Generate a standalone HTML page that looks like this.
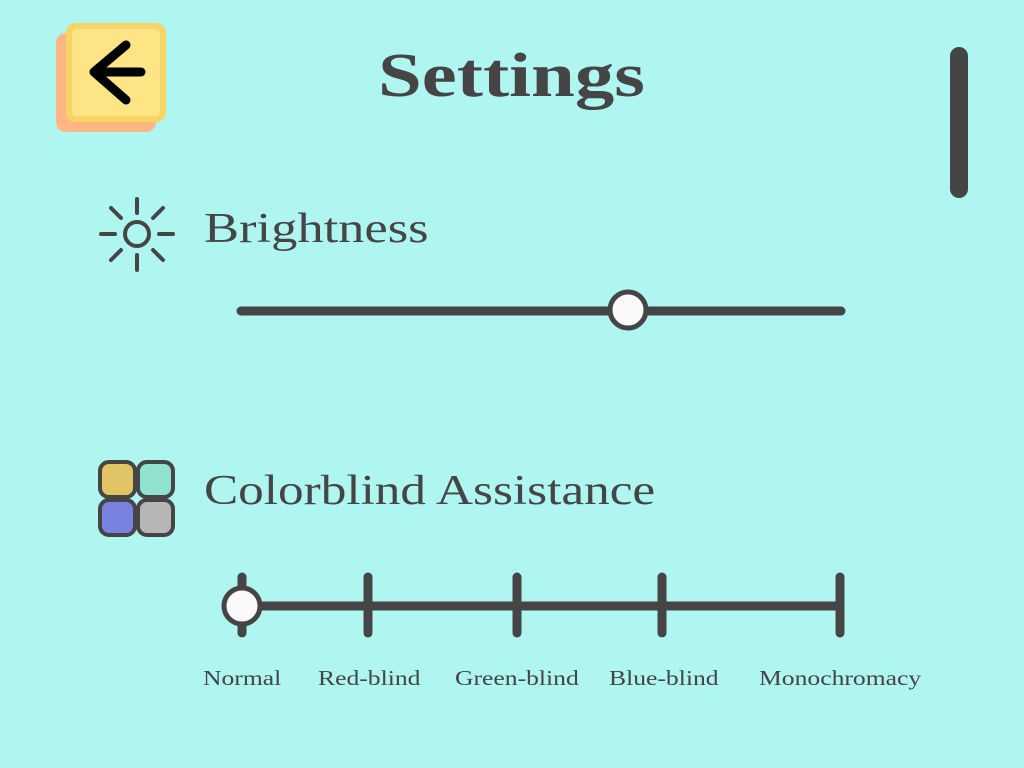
<!DOCTYPE html>
<html><head><style>
html,body{margin:0;width:1024px;height:768px;background:#aff5f0;overflow:hidden;font-family:"Liberation Serif",serif;color:#454545;position:relative}
.t{position:absolute;white-space:nowrap;transform-origin:0 0;transform:scaleX(1.22)}
</style></head><body>
<div style="position:absolute;left:56px;top:33px;width:100px;height:99px;background:#ffb682;border-radius:10px"></div>
<div style="position:absolute;left:66px;top:23px;width:88px;height:87px;background:#fde585;border:6px solid #f5d565;border-radius:10px"></div>
<svg style="position:absolute;left:0;top:0" width="1024" height="768">
<path d="M126 45 L94 72 L126 100 M94 72 H141" stroke="#000" stroke-width="9" fill="none" stroke-linecap="round" stroke-linejoin="round"/>
<g stroke="#454545" stroke-width="4" stroke-linecap="round" fill="none">
<circle cx="137" cy="234" r="12"/>
<path d="M137 199V213M137 255V270M101 234H115M159 234H173M111 208L121 218M153 250L163 260M163 208L153 218M121 250L111 260"/>
</g>
<line x1="241" y1="311" x2="841" y2="311" stroke="#454545" stroke-width="9" stroke-linecap="round"/>
<circle cx="628" cy="310" r="18" fill="#fafafa" stroke="#454545" stroke-width="5"/>
<g stroke="#454545" stroke-width="4">
<rect x="100" y="462" width="35" height="35" rx="9" fill="#e1c565"/>
<rect x="138" y="462" width="35" height="35" rx="9" fill="#8fe2d0"/>
<rect x="100" y="500" width="35" height="35" rx="9" fill="#7a82e1"/>
<rect x="138" y="500" width="35" height="35" rx="9" fill="#b6b6b6"/>
</g>
<g stroke="#454545" stroke-width="9" stroke-linecap="round">
<line x1="242" y1="606" x2="840" y2="606"/>
<line x1="242" y1="577" x2="242" y2="633"/>
<line x1="368" y1="577" x2="368" y2="633"/>
<line x1="517" y1="577" x2="517" y2="633"/>
<line x1="662" y1="577" x2="662" y2="633"/>
<line x1="840" y1="577" x2="840" y2="633"/>
<line x1="959" y1="56" x2="959" y2="189" stroke-width="18"/>
</g>
<circle cx="242" cy="606" r="18" fill="#fafafa" stroke="#454545" stroke-width="5"/>
</svg>
<div class="t" style="left:378px;transform:scaleX(1.27);top:40px;font-size:62px;font-weight:bold;line-height:72px">Settings</div>
<div class="t" style="left:204px;transform:scaleX(1.25);top:204px;font-size:42px;line-height:50px">Brightness</div>
<div class="t" style="left:204px;top:466px;font-size:42px;line-height:50px">Colorblind Assistance</div>
<div class="t" style="left:203px;top:666px;font-size:21px">Normal</div>
<div class="t" style="left:318px;top:666px;font-size:21px">Red-blind</div>
<div class="t" style="left:455px;top:666px;font-size:21px">Green-blind</div>
<div class="t" style="left:609px;top:666px;font-size:21px">Blue-blind</div>
<div class="t" style="left:759px;top:666px;font-size:21px">Monochromacy</div>
</body></html>
